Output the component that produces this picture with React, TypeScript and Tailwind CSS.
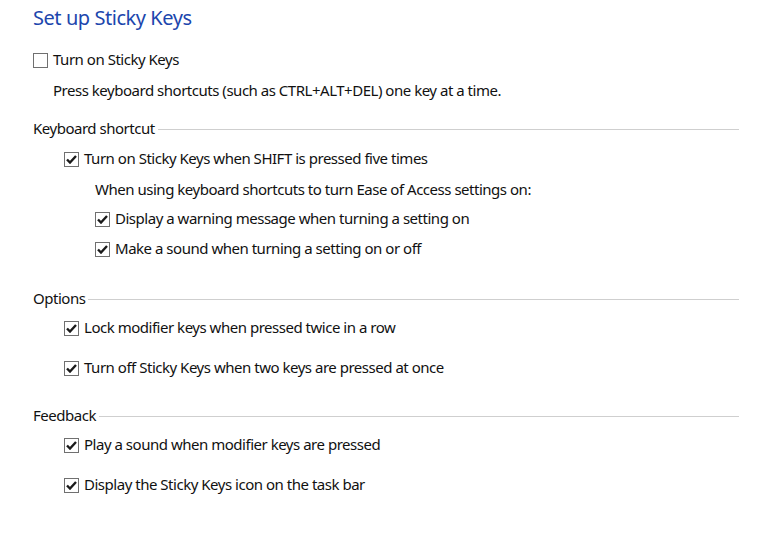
import React from "react";

function Box({ checked }: { checked: boolean }) {
  return (
    <span className="mt-[4px] flex h-[15px] w-[15px] shrink-0 items-center justify-center self-start border border-[#707070] bg-white">
      {checked && (
        <svg width="11" height="9" viewBox="0 0 11 9">
          <path d="M1 4.5 L4 7.5 L10 1" fill="none" stroke="#1a1a1a" strokeWidth="2.4" />
        </svg>
      )}
    </span>
  );
}

function Check({ label, checked = true, className = "" }: { label: string; checked?: boolean; className?: string }) {
  return (
    <label className={`flex h-5 gap-[5px] ${className}`}>
      <Box checked={checked} />
      <span>{label}</span>
    </label>
  );
}

function Section({ title, className = "" }: { title: string; className?: string }) {
  return (
    <div className={`flex h-5 items-center ${className}`}>
      <span>{title}</span>
      <span className="ml-[3px] mt-[2px] h-px flex-1 bg-[#cfcfcf]" />
    </div>
  );
}

export default function App() {
  return (
    <div className="h-[547px] w-[760px] overflow-hidden bg-white pl-[33px] pr-[21px] pt-[4px] font-['Noto_Sans',sans-serif] text-[15px] leading-5 tracking-[-0.48px] text-[#111]">
      <h1 className="text-[20px] leading-[28px] tracking-[-0.45px] text-[#1c46ad]">Set up Sticky Keys</h1>

      <Check label="Turn on Sticky Keys" checked={false} className="mt-[17px]" />
      <p className="mt-[11px] pl-[20px]">Press keyboard shortcuts (such as CTRL+ALT+DEL) one key at a time.</p>

      <Section title="Keyboard shortcut" className="mt-[18px]" />
      <div className="pl-[31px]">
        <Check label="Turn on Sticky Keys when SHIFT is pressed five times" className="mt-[10px]" />
        <p className="mt-[11px] pl-[31px]">When using keyboard shortcuts to turn Ease of Access settings on:</p>
        <div className="pl-[31px]">
          <Check label="Display a warning message when turning a setting on" className="mt-[9px]" />
          <Check label="Make a sound when turning a setting on or off" className="mt-[10px]" />
        </div>
      </div>

      <Section title="Options" className="mt-[30px]" />
      <div className="pl-[31px]">
        <Check label="Lock modifier keys when pressed twice in a row" className="mt-[9px]" />
        <Check label="Turn off Sticky Keys when two keys are pressed at once" className="mt-[20px]" />
      </div>

      <Section title="Feedback" className="mt-[28px]" />
      <div className="pl-[31px]">
        <Check label="Play a sound when modifier keys are pressed" className="mt-[9px]" />
        <Check label="Display the Sticky Keys icon on the task bar" className="mt-[20px]" />
      </div>
    </div>
  );
}
